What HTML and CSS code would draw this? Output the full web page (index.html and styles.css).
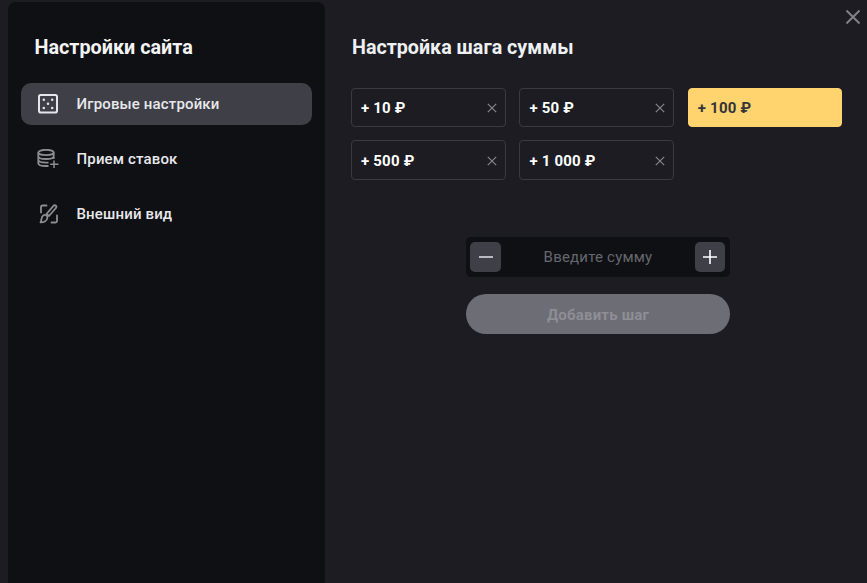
FILE: index.html
```html
<!DOCTYPE html>
<html lang="ru">
<head>
<meta charset="utf-8">
<title>Настройки сайта</title>
<link rel="stylesheet" href="styles.css">
</head>
<body>
<div class="modal">
  <aside class="sidebar">
    <h2 class="side-title">Настройки сайта</h2>
    <nav class="menu">
      <a class="menu-item active">
        <svg class="menu-icon" viewBox="0 0 22 20" fill="none"><rect x="2" y="1" width="18" height="17.500" rx="1.800" stroke="#e6e6ea" stroke-width="2"/><g fill="#e6e6ea"><circle cx="6.800" cy="5.700" r="1.250"/><circle cx="15.200" cy="5.700" r="1.250"/><circle cx="11" cy="9.800" r="1.250"/><circle cx="6.800" cy="13.900" r="1.250"/><circle cx="15.200" cy="13.900" r="1.250"/></g></svg>
        <span>Игровые настройки</span>
      </a>
      <a class="menu-item">
        <svg class="menu-icon" viewBox="0 0 22 20" fill="none" stroke="#8c8c92" stroke-width="1.800"><ellipse cx="9" cy="3.500" rx="7.700" ry="2.700"/><path d="M1.300 3.500V14.200C1.300 15.900 4.800 17 9 17h2.500M16.700 3.500V10M1.300 7.200C1.300 8.900 4.800 10 9 10s7.700-1.100 7.700-2.800M1.300 10.800C1.300 12.500 4.800 13.600 9 13.600h2.500"/><path d="M17 11.500v7.500M13.200 15.200h8.300" stroke-width="1.500"/></svg>
        <span>Прием ставок</span>
      </a>
      <a class="menu-item">
        <svg class="menu-icon" viewBox="0 0 22 20" fill="none" stroke="#8c8c92" stroke-width="1.800" stroke-linecap="round" stroke-linejoin="round"><path d="M4 8.500V3C4 2 4.600 1.500 5.500 1.500H9.500M20 11.500V17C20 18 19.400 18.500 18.500 18.500H14.500"/><path d="M19 1.800c-1-.8-2.200-.4-3 .5L9.500 10l2.500 2 6.500-7.500c.9-1 1.300-2 .5-2.700z"/><path d="M6.500 11.300c1.700-1 4.200.2 3.900 2.500-.4 2.700-3.400 4.700-6.900 4.600.7-1 .8-2.200 1-3.600.2-1.300.8-2.700 2-3.500z"/></svg>
        <span>Внешний вид</span>
      </a>
    </nav>
  </aside>
  <main class="content">
    <button class="close" aria-label="Закрыть">
      <svg viewBox="0 0 14 14" width="14" height="14" fill="none" stroke="#808086" stroke-width="2"><path d="M.5.500l13 13M13.500.500l-13 13"/></svg>
    </button>
    <h2 class="main-title">Настройка шага суммы</h2>
    <div class="chips">
      <div class="chip"><span>+ 10 ₽</span><svg class="chip-x" viewBox="0 0 10 10"><path d="M.8.800l8.400 8.400M9.200.800L.8 9.200"/></svg></div>
      <div class="chip"><span>+ 50 ₽</span><svg class="chip-x" viewBox="0 0 10 10"><path d="M.8.800l8.400 8.400M9.200.800L.8 9.200"/></svg></div>
      <div class="chip chip-active"><span>+ 100 ₽</span></div>
      <div class="chip chip-tall"><span>+ 500 ₽</span><svg class="chip-x" viewBox="0 0 10 10"><path d="M.8.800l8.400 8.400M9.200.800L.8 9.200"/></svg></div>
      <div class="chip chip-tall"><span>+ 1 000 ₽</span><svg class="chip-x" viewBox="0 0 10 10"><path d="M.8.800l8.400 8.400M9.200.800L.8 9.200"/></svg></div>
    </div>
    <form class="add-form">
      <div class="stepper">
        <button type="button" class="step"><svg viewBox="0 0 14 14" width="14" height="14"><path d="M0 7h14" stroke="#e4e4e8" stroke-width="1.500"/></svg></button>
        <span class="placeholder">Введите сумму</span>
        <button type="button" class="step"><svg viewBox="0 0 14 14" width="14" height="14"><path d="M0 7h14M7 0v14" stroke="#fff" stroke-width="1.600"/></svg></button>
      </div>
      <button type="button" class="submit">Добавить шаг</button>
    </form>
  </main>
</div>
</body>
</html>
```
FILE: styles.css
```css
* { box-sizing: border-box; }
html, body { height: 100%; }
body {
  margin: 0;
  background: #1c1c22;
  font-family: Roboto, "Liberation Sans", sans-serif;
  color: #f2f2f4;
  overflow: hidden;
}
.modal {
  display: flex;
  height: 583px;
  padding: 2px 0 0 8px;
}
.sidebar {
  width: 317px;
  flex: none;
  background: #0f1014;
  border-radius: 8px 8px 0 0;
  padding: 35px 13px 0;
}
.side-title {
  margin: 0 0 24px 13.500px;
  font-size: 19.800px;
  line-height: 22px;
  font-weight: 700;
  color: #f4f4f6;
}
.menu {
  display: flex;
  flex-direction: column;
  gap: 13px;
}
.menu-item {
  display: flex;
  align-items: center;
  gap: 17.500px;
  height: 42px;
  padding: 0 0 0 16px;
  border-radius: 10px;
  font-size: 15px;
  letter-spacing: 0.15px;
  font-weight: 500;
  color: #e8e8ec;
}
.menu-item.active {
  background: #3f4047;
}
.menu-icon {
  width: 22px;
  height: 20px;
  flex: none;
}
.content {
  position: relative;
  flex: 1;
  padding: 35px 0 0 26px;
}
.close {
  position: absolute;
  top: 8px;
  right: 7px;
  padding: 0;
  width: 14px;
  height: 14px;
  border: 0;
  background: none;
  line-height: 0;
}
.main-title {
  margin: 0 0 29px 1px;
  font-size: 19.700px;
  line-height: 22px;
  font-weight: 700;
  color: #eef0f4;
}
.chips {
  display: grid;
  grid-template-columns: 155px 155px 154px;
  column-gap: 13.400px;
  row-gap: 13px;
  width: 491px;
}
.chip {
  display: flex;
  align-items: center;
  justify-content: space-between;
  height: 39px;
  padding: 0 8px 0 9px;
  border: 1px solid #3a3b41;
  border-radius: 4px;
  font-size: 15px;
  letter-spacing: 0.2px;
  font-weight: 700;
  color: #fff;
}
.chip-tall {
  height: 40px;
  padding-top: 1px;
}
.chip-active {
  background: #ffd36e;
  border-color: #ffd36e;
  color: #33343a;
}
.chip-x {
  width: 10px;
  height: 10px;
  flex: none;
  fill: none;
  stroke: #86868c;
  stroke-width: 1.200;
}
.add-form {
  display: flex;
  flex-direction: column;
  gap: 17px;
  width: 264px;
  margin: 57px 0 0 115px;
}
.stepper {
  display: flex;
  align-items: center;
  justify-content: space-between;
  height: 40px;
  padding: 0 5px 0 4px;
  background: #0f1014;
  border-radius: 5px;
}
.step {
  display: flex;
  align-items: center;
  justify-content: center;
  width: 31px;
  height: 30px;
  padding: 0;
  border: 0;
  border-radius: 5px;
  background: #3f4047;
}
.step:last-child { width: 30px; }
.placeholder {
  font-size: 15px;
  letter-spacing: 0.2px;
  color: #66676d;
}
.submit {
  height: 40px;
  padding: 1px 0 0;
  border: 0;
  border-radius: 20px;
  background: #6d6d75;
  font-family: inherit;
  font-size: 15px;
  letter-spacing: 0.2px;
  font-weight: 700;
  color: #8e8e96;
}
```
